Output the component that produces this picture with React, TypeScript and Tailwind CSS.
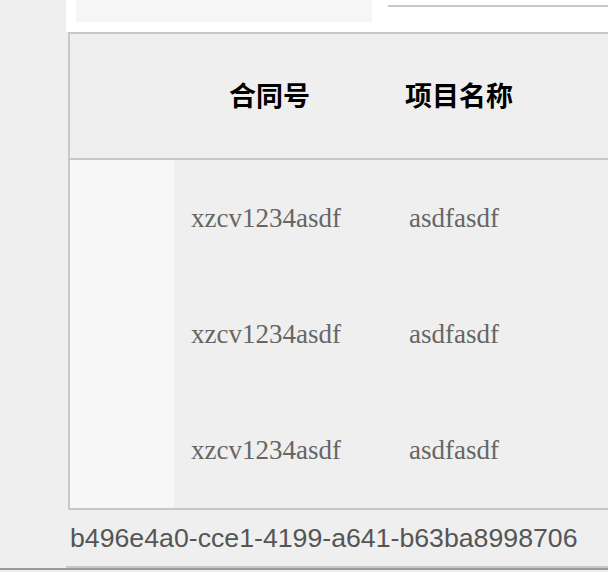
import React from "react";

const rows = [
  { code: "xzcv1234asdf", name: "asdfasdf" },
  { code: "xzcv1234asdf", name: "asdfasdf" },
  { code: "xzcv1234asdf", name: "asdfasdf" },
];

export default function App() {
  return (
    <div className="w-[608px] h-[572px] bg-[#efefef] overflow-hidden flex flex-col">
      <div className="ml-[66px] h-[32px] bg-white flex shrink-0">
        <div className="ml-[10px] w-[296px] h-[22px] bg-[#f6f6f6]" />
        <div className="ml-[16px] mt-[5px] h-[2px] flex-1 bg-[#c8c8c8]" />
      </div>
      <div className="ml-[68px] w-[640px] shrink-0 border-2 border-r-0 border-[#c8c8c8] bg-[#efefef]">
        <div
          className="h-[126px] pt-[2px] flex items-center border-b-2 border-[#c8c8c8] text-[27px] font-bold text-black"
          style={{ fontFamily: '"Liberation Serif", "Noto Sans CJK SC", serif' }}
        >
          <div className="w-[159px] shrink-0" />
          <div className="w-[176px] shrink-0">合同号</div>
          <div>项目名称</div>
        </div>
        {rows.map((r, i) => (
          <div key={i} className="h-[116px] flex">
            <div className="w-[104px] shrink-0 bg-[#f7f7f7]" />
            <div
              className="flex items-center text-[27px] text-[#666]"
              style={{ fontFamily: '"Liberation Serif", "DejaVu Serif", serif' }}
            >
              <div className="w-[218px] pl-[17px] shrink-0">{r.code}</div>
              <div className="pl-[17px]">{r.name}</div>
            </div>
          </div>
        ))}
      </div>
      <div
        className="ml-[68px] pl-[2px] h-[56px] flex items-center text-[26.7px] text-[#555] shrink-0"
        style={{ fontFamily: '"Liberation Sans", Arial, sans-serif' }}
      >
        b496e4a0-cce1-4199-a641-b63ba8998706
      </div>
      <div className="ml-[66px] h-[2px] bg-[#c8c8c8] shrink-0" />
      <div className="h-[2px] bg-[#9a9a9a] shrink-0" />
    </div>
  );
}
